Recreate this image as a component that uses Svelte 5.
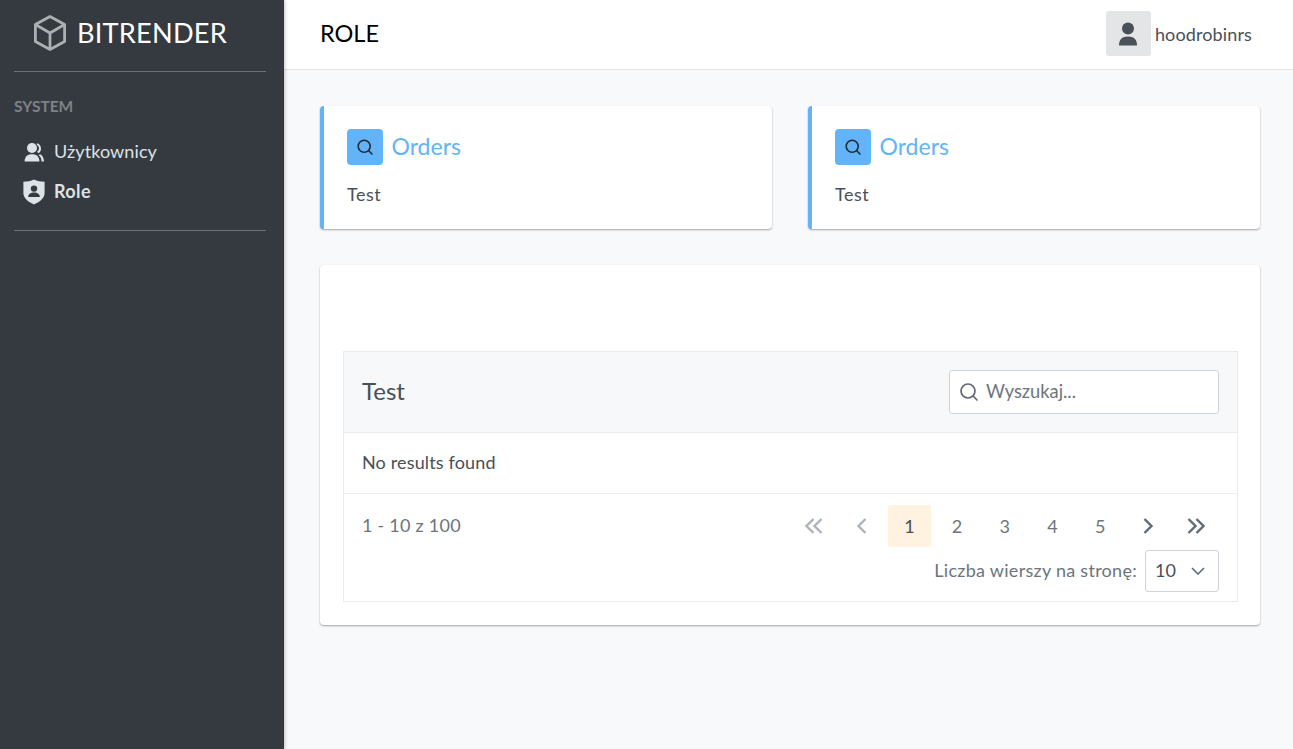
<script lang="ts">
	const cards = ["Orders", "Orders"];
	const pages = [1, 2, 3, 4, 5];
</script>

<div class="app">
	<aside class="sidebar">
		<div class="brand">
			<svg class="cube" viewBox="0 0 32 36" width="32" height="36" fill="none" stroke="#adb0b3" stroke-width="2.8" stroke-linejoin="round">
				<path d="M16 1.600 30.600 9.600V26.400L16 34.400 1.400 26.400V9.600Z" />
				<path d="M1.800 9.800 16 18 30.200 9.800M16 18V34" />
			</svg>
			<span>BITRENDER</span>
		</div>
		<hr />
		<div class="section">SYSTEM</div>
		<nav>
			<a href="#users" class="item">
				<svg viewBox="0 0 20 20" width="20" height="20" fill="#dee2e6">
					<circle cx="8" cy="6" r="5" />
					<path d="M0.600 19.500c0-4.800 2.600-7.300 7.400-7.300s7.400 2.500 7.400 7.300z" />
					<path d="M12.800 1.200a5.500 5.500 0 0 1 1.600 10l-1.300-1.400a4 4 0 0 0-.3-7z" />
					<path d="M16 12.300c2.600 1 3.800 3.600 4 7.200h-2.500c0-2.800-1-5-3-6.200z" />
				</svg>
				<span>Użytkownicy</span>
			</a>
			<a href="#role" class="item active">
				<svg viewBox="0 0 22 26" width="22" height="26">
					<path fill="#dee2e6" d="M11 .6C14 2 17.500 2.800 21.600 2.800V14c0 5-4.400 8.800-10.600 11.400C4.800 22.800.4 19 .4 14V2.800C4.500 2.800 8 2 11 .6Z" />
					<circle fill="#343a40" cx="11" cy="9.600" r="3.200" />
					<path fill="#343a40" d="M5.200 18c0-3 2.400-4.600 5.800-4.600s5.800 1.600 5.800 4.600z" />
				</svg>
				<span>Role</span>
			</a>
		</nav>
		<hr />
	</aside>

	<div class="page">
		<header class="topbar">
			<h1>ROLE</h1>
			<div class="user">
				<div class="avatar">
					<svg viewBox="0 0 20 24" width="20" height="24" fill="#495057">
						<circle cx="10" cy="6.500" r="6" />
						<path d="M1 23.500c0-6 3-9 9-9s9 3 9 9z" />
					</svg>
				</div>
				<span>hoodrobinrs</span>
			</div>
		</header>

		<main class="content">
			<div class="cards">
				{#each cards as title}
					<section class="card stat">
						<div class="stat-head">
							<div class="stat-icon">
								<svg viewBox="0 0 18 18" width="18" height="18" fill="none" stroke="#212b36" stroke-width="1.600" stroke-linecap="round">
									<circle cx="8.200" cy="8.200" r="6" />
									<path d="M12.700 12.700 16 16" />
								</svg>
							</div>
							<span>{title}</span>
						</div>
						<p>Test</p>
					</section>
				{/each}
			</div>

			<section class="card panel">
				<div class="table">
					<div class="table-head">
						<h2>Test</h2>
						<label class="search">
							<svg viewBox="0 0 20 20" width="20" height="20" fill="none" stroke="#5f6b76" stroke-width="1.700" stroke-linecap="round">
								<circle cx="9" cy="9" r="7" />
								<path d="M14.200 14.200 18 18" />
							</svg>
							<input placeholder="Wyszukaj..." />
						</label>
					</div>
					<div class="empty">No results found</div>
					<div class="table-foot">
						<div class="range">1 - 10 z 100</div>
						<div class="foot-right">
							<div class="pager">
								<span class="pg off">
									<svg viewBox="0 0 18 16" width="18" height="16"><path d="M8.500 1 1.500 8l7 7M16.500 1 9.500 8l7 7" /></svg>
								</span>
								<span class="pg off">
									<svg viewBox="0 0 18 16" width="18" height="16"><path d="M12.500 1 5.500 8l7 7" /></svg>
								</span>
								{#each pages as p}
									<span class="pg" class:current={p === 1}>{p}</span>
								{/each}
								<span class="pg">
									<svg viewBox="0 0 18 16" width="18" height="16"><path d="M5.500 1 12.500 8l-7 7" /></svg>
								</span>
								<span class="pg">
									<svg viewBox="0 0 18 16" width="18" height="16"><path d="M1.500 1 8.500 8l-7 7M9.500 1 16.500 8l-7 7" /></svg>
								</span>
							</div>
							<div class="per-page">
								<span>Liczba wierszy na stronę:</span>
								<div class="select">
									<span>10</span>
									<svg viewBox="0 0 14 8" width="14" height="8" fill="none" stroke="#5f6b76" stroke-width="1.600"><path d="M1 1l6 6 6-6" /></svg>
								</div>
							</div>
						</div>
					</div>
				</div>
			</section>
		</main>
	</div>
</div>

<style>
	:global(body) {
		margin: 0;
		font-family: Lato, "Open Sans", sans-serif;
		color: #495057;
	}

	.app {
		display: flex;
		height: 749px;
		overflow: hidden;
		background: #f8f9fb;
	}

	.sidebar {
		width: 284px;
		flex: none;
		box-sizing: border-box;
		padding: 0 18px 0 14px;
		background: #343a40;
		box-shadow: 0 0 4px rgba(0, 0, 0, 0.35);
		position: relative;
	}

	.brand {
		height: 71px;
		box-sizing: border-box;
		padding: 0 0 5px 20px;
		display: flex;
		align-items: center;
		gap: 11px;
		font-size: 27.200px;
		color: #fff;
		letter-spacing: 0.2px;
	}

	.brand span {
		margin-bottom: 1px;
	}

	hr {
		margin: 0;
		border: 0;
		border-top: 1px solid #6c7075;
	}

	.section {
		margin-top: 26px;
		font-size: 15.500px;
		font-weight: 700;
		line-height: 17px;
		color: #7e8286;
	}

	nav {
		margin-top: 17px;
		padding-bottom: 18px;
		display: flex;
		flex-direction: column;
	}

	.item {
		height: 40px;
		display: flex;
		align-items: center;
		gap: 9px;
		padding-left: 9px;
		font-size: 18px;
		letter-spacing: 0.1px;
		color: #dee2e6;
		text-decoration: none;
	}

	.item svg {
		width: 22px;
		flex: none;
	}

	.item span {
		margin-bottom: 2px;
	}

	.item.active {
		font-weight: 700;
		letter-spacing: 0.4px;
	}

	.page {
		flex: 1;
		min-width: 0;
	}

	.topbar {
		height: 70px;
		box-sizing: border-box;
		padding: 0 41px 2px 36px;
		display: flex;
		align-items: center;
		justify-content: space-between;
		background: #fff;
		border-bottom: 1px solid #e2e4e7;
	}

	h1 {
		margin: 0 0 1px;
		font-size: 23.500px;
		font-weight: 400;
		color: #000;
	}

	.user {
		display: flex;
		align-items: center;
		gap: 4px;
		font-size: 18px;
		letter-spacing: 0.13px;
	}

	.avatar {
		width: 45px;
		height: 45px;
		border-radius: 3px;
		background: #e4e5e6;
		display: flex;
		align-items: center;
		justify-content: center;
	}

	.content {
		padding: 36px 33px 0 36px;
	}

	.cards {
		display: grid;
		grid-template-columns: 1fr 1fr;
		gap: 36px;
	}

	.card {
		background: #fff;
		border-radius: 4px;
		box-shadow: 0 1px 2px rgba(0, 0, 0, 0.35);
	}

	.stat {
		height: 123px;
		box-sizing: border-box;
		padding: 23px 23px 0;
		border-left: 4px solid #63b3f8;
	}

	.stat-head {
		display: flex;
		align-items: center;
		gap: 8.500px;
		font-size: 23px;
		color: #63b3f8;
	}

	.stat-head span {
		margin-bottom: 2px;
	}

	.stat-icon {
		width: 36px;
		height: 36px;
		border-radius: 4px;
		background: #63b3f8;
		display: flex;
		align-items: center;
		justify-content: center;
	}

	.stat p {
		margin: 17px 0 0;
		font-size: 18px;
		letter-spacing: 0.5px;
		line-height: 24px;
	}

	.panel {
		margin-top: 36px;
		height: 360px;
		box-sizing: border-box;
		padding: 86px 22px 0 23px;
	}

	.table {
		border: 1px solid #e9ecef;
		height: 251px;
		box-sizing: border-box;
	}

	.table-head {
		height: 81px;
		box-sizing: border-box;
		padding: 0 18px;
		display: flex;
		align-items: center;
		justify-content: space-between;
		background: #f7f8fa;
		border-bottom: 1px solid #e9ecef;
	}

	h2 {
		margin: 0 0 4px;
		font-size: 24px;
		font-weight: 400;
	}

	.search {
		width: 270px;
		height: 44px;
		box-sizing: border-box;
		padding: 0 9px;
		display: flex;
		align-items: center;
		gap: 7px;
		background: #fff;
		border: 1px solid #ced4da;
		border-radius: 3px;
	}

	.search input {
		flex: 1;
		min-width: 0;
		border: 0;
		outline: 0;
		padding: 0 0 2px;
		background: none;
		font: inherit;
		font-size: 18.300px;
	}

	.search input::placeholder {
		color: #6c757d;
		opacity: 1;
	}

	.empty {
		height: 61px;
		box-sizing: border-box;
		padding: 0 18px 2px;
		display: flex;
		align-items: center;
		font-size: 18px;
		letter-spacing: 0.15px;
		border-bottom: 1px solid #e9ecef;
	}

	.table-foot {
		padding: 11px 18px 0;
		display: flex;
		justify-content: space-between;
		color: #6c757d;
		font-size: 18px;
	}

	.range {
		line-height: 40px;
		letter-spacing: 0.25px;
	}

	.foot-right {
		display: flex;
		flex-direction: column;
		align-items: flex-end;
	}

	.pager {
		display: flex;
		gap: 4.700px;
		margin-right: 2px;
	}

	.pg {
		width: 43px;
		height: 42px;
		box-sizing: border-box;
		padding-bottom: 1px;
		border-radius: 3px;
		display: flex;
		align-items: center;
		justify-content: center;
	}

	.pg svg {
		fill: none;
		stroke: #5f6b76;
		stroke-width: 2.400;
	}

	.pg.off svg {
		stroke: #adb3b9;
	}

	.pg.current {
		background: #fff2e0;
		color: #495057;
	}

	.per-page {
		margin-top: 3px;
		display: flex;
		align-items: center;
		gap: 8px;
		letter-spacing: 0.28px;
	}

	.per-page > span {
		margin-bottom: 2px;
	}

	.select {
		width: 74px;
		height: 42px;
		box-sizing: border-box;
		padding: 0 13px 2px 9px;
		display: flex;
		align-items: center;
		justify-content: space-between;
		border: 1px solid #ced4da;
		border-radius: 3px;
		color: #495057;
		letter-spacing: 0;
	}

	.select svg {
		margin-top: 2px;
	}
</style>
